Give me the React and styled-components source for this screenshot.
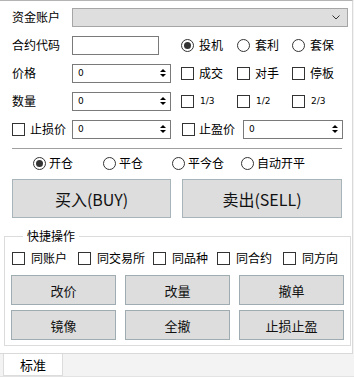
import React from "react";
import styled, { createGlobalStyle } from "styled-components";

const GlobalStyle = createGlobalStyle`
	body {
		margin: 0;
		background: #f3f3f3;
		font-family: "Noto Sans CJK SC", "Microsoft YaHei", sans-serif;
		font-size: 12px;
		color: #000;
	}
`;

const Window = styled.div`
	width: 354px;
	height: 377px;
	display: flex;
	flex-direction: column;
	border-bottom: 1px solid #e3e3e3;
	box-sizing: border-box;
`;

const Panel = styled.div`
	width: 353px;
	height: 354px;
	box-sizing: border-box;
	background: #fff;
	border-top: 1px solid #b4b4b4;
	border-right: 1px solid #d9d9d9;
	border-bottom: 1px solid #d9d9d9;
	padding-top: 2px;
`;

const Row = styled.div`
	display: grid;
	grid-template-columns: 169px 1fr;
	align-items: center;
	height: 28px;
	padding-left: 12px;
`;

const Left = styled.div`
	display: flex;
	align-items: center;
	grid-column: ${(p) => (p.$wide ? "1 / -1" : "auto")};
`;

const Label = styled.span`
	width: 60px;
	line-height: 16px;
	white-space: nowrap;
	flex: none;
`;

const Combo = styled.div`
	width: 276px;
	height: 19px;
	box-sizing: border-box;
	background: #dedede;
	border: 1px solid #a6a6a6;
	display: flex;
	align-items: center;
	justify-content: flex-end;
	padding-right: 7px;
`;

const TextBox = styled.div`
	width: ${(p) => p.$w || 87}px;
	height: 19px;
	box-sizing: border-box;
	background: #fff;
	border: 1px solid #7a7a7a;
	display: flex;
	align-items: center;
	justify-content: space-between;
	padding: 0 4px 0 5px;
	font-family: "DejaVu Sans", sans-serif;
	font-size: 9px;
	flex: none;
`;

const Arrows = styled.div`
	display: flex;
	flex-direction: column;
	gap: 2px;
	align-items: center;
`;

const Tri = styled.div`
	width: 0;
	height: 0;
	border-left: 3px solid transparent;
	border-right: 3px solid transparent;
	${(p) =>
		p.$down
			? "border-top: 3px solid #000;"
			: "border-bottom: 3px solid #000;"}
`;

const Options = styled.div`
	display: grid;
	grid-template-columns: ${(p) => p.$cols};
	align-items: center;
`;

const Option = styled.label`
	display: flex;
	align-items: center;
	gap: ${(p) => p.$gap ?? 5}px;
	white-space: nowrap;
	line-height: 16px;
	font-size: ${(p) => (p.$small ? "9px" : "12px")};
	font-family: ${(p) =>
		p.$small ? '"DejaVu Sans", sans-serif' : 'inherit'};
`;

const Radio = styled.span`
	width: 13px;
	height: 13px;
	box-sizing: border-box;
	border: 1px solid #333;
	border-radius: 50%;
	display: flex;
	align-items: center;
	justify-content: center;
	flex: none;
	&::after {
		content: "";
		width: 7px;
		height: 7px;
		border-radius: 50%;
		background: #333;
		display: ${(p) => (p.$on ? "block" : "none")};
	}
`;

const Check = styled.span`
	width: 13px;
	height: 13px;
	box-sizing: border-box;
	border: 1px solid #333;
	background: #fff;
	flex: none;
`;

const CheckLabel = styled(Option)`
	width: ${(p) => p.$w || 60}px;
	flex: none;
`;

const RightField = styled.div`
	display: flex;
	align-items: center;
	padding-left: 1px;
`;

const Separator = styled.div`
	margin: 5px 10px 0 12px;
	height: 1px;
	background: #a0a0a0;
`;

const ModeRow = styled.div`
	display: grid;
	grid-template-columns: 70px 69px 69px auto;
	align-items: center;
	height: 20px;
	margin-top: 4px;
	padding-left: 33px;
`;

const TradeRow = styled.div`
	display: flex;
	gap: 11px;
	padding-left: 12px;
	margin-top: 6px;
`;

const TradeButton = styled.button`
	width: ${(p) => p.$w}px;
	height: 39px;
	background: #dddddd;
	border: 1px solid #a7b4ba;
	font-family: "Noto Sans CJK SC", sans-serif;
	font-size: 16px;
	color: #111;
	padding: 0;
`;

const Group = styled.fieldset`
	margin: 10px 0 0 4px;
	width: 347px;
	box-sizing: border-box;
	border: 1px solid #dcdcdc;
	padding: 0 6px 5px 6px;
`;

const Legend = styled.legend`
	margin-left: 12px;
	padding: 0 4px;
	font-size: 12px;
	line-height: 16px;
`;

const SameRow = styled.div`
	display: grid;
	grid-template-columns: 66px 75px 64px 66px auto;
	align-items: center;
	height: 20px;
	margin-top: 4px;
	padding-left: 1px;
`;

const QuickGrid = styled.div`
	display: grid;
	grid-template-columns: repeat(3, 105px);
	grid-auto-rows: 30px;
	column-gap: 9px;
	row-gap: 5px;
	margin-top: 7px;
`;

const QuickButton = styled.button`
	background: #dddddd;
	border: 1px solid #9fadb2;
	font-family: "Noto Sans CJK SC", sans-serif;
	font-size: 13px;
	color: #111;
	padding: 0;
`;

const TabBar = styled.div`
	display: flex;
	padding-left: 3px;
`;

const Tab = styled.div`
	width: 60px;
	height: 22px;
	box-sizing: border-box;
	background: #fff;
	border: 1px solid #dcdcdc;
	border-top: none;
	display: flex;
	align-items: center;
	justify-content: center;
	font-size: 13px;
`;

function Chevron() {
	return (
		<svg width="8" height="5" viewBox="0 0 8 5">
			<path d="M0.5 0.5 L4 4 L7.5 0.5" fill="none" stroke="#333" strokeWidth="1" />
		</svg>
	);
}

function Spin({ w }) {
	return (
		<TextBox $w={w}>
			<span>0</span>
			<Arrows>
				<Tri />
				<Tri $down />
			</Arrows>
		</TextBox>
	);
}

export default function App() {
	return (
		<Window>
			<GlobalStyle />
			<Panel>
				<Row>
					<Left $wide>
						<Label>资金账户</Label>
						<Combo>
							<Chevron />
						</Combo>
					</Left>
				</Row>
				<Row>
					<Left>
						<Label>合约代码</Label>
						<TextBox $w={87} />
					</Left>
					<Options $cols="56px 55px auto">
						<Option><Radio $on />投机</Option>
						<Option><Radio />套利</Option>
						<Option><Radio />套保</Option>
					</Options>
				</Row>
				<Row>
					<Left>
						<Label>价格</Label>
						<Spin w={99} />
					</Left>
					<Options $cols="56px 55px auto">
						<Option><Check />成交</Option>
						<Option><Check />对手</Option>
						<Option><Check />停板</Option>
					</Options>
				</Row>
				<Row>
					<Left>
						<Label>数量</Label>
						<Spin w={99} />
					</Left>
					<Options $cols="56px 55px auto">
						<Option $small $gap={6}><Check />1/3</Option>
						<Option $small $gap={6}><Check />1/2</Option>
						<Option $small $gap={6}><Check />2/3</Option>
					</Options>
				</Row>
				<Row>
					<Left>
						<CheckLabel><Check />止损价</CheckLabel>
						<Spin w={99} />
					</Left>
					<RightField>
						<CheckLabel $w={61} $gap={4}><Check />止盈价</CheckLabel>
						<Spin w={100} />
					</RightField>
				</Row>
				<Separator />
				<ModeRow>
					<Option $gap={3}><Radio $on />开仓</Option>
					<Option $gap={3}><Radio />平仓</Option>
					<Option $gap={3}><Radio />平今仓</Option>
					<Option $gap={3}><Radio />自动开平</Option>
				</ModeRow>
				<TradeRow>
					<TradeButton $w={159}>买入(BUY)</TradeButton>
					<TradeButton $w={160}>卖出(SELL)</TradeButton>
				</TradeRow>
				<Group>
					<Legend>快捷操作</Legend>
					<SameRow>
						<Option $gap={6}><Check />同账户</Option>
						<Option $gap={6}><Check />同交易所</Option>
						<Option $gap={6}><Check />同品种</Option>
						<Option $gap={6}><Check />同合约</Option>
						<Option $gap={6}><Check />同方向</Option>
					</SameRow>
					<QuickGrid>
						<QuickButton>改价</QuickButton>
						<QuickButton>改量</QuickButton>
						<QuickButton>撤单</QuickButton>
						<QuickButton>镜像</QuickButton>
						<QuickButton>全撤</QuickButton>
						<QuickButton>止损止盈</QuickButton>
					</QuickGrid>
				</Group>
			</Panel>
			<TabBar>
				<Tab>标准</Tab>
			</TabBar>
		</Window>
	);
}
